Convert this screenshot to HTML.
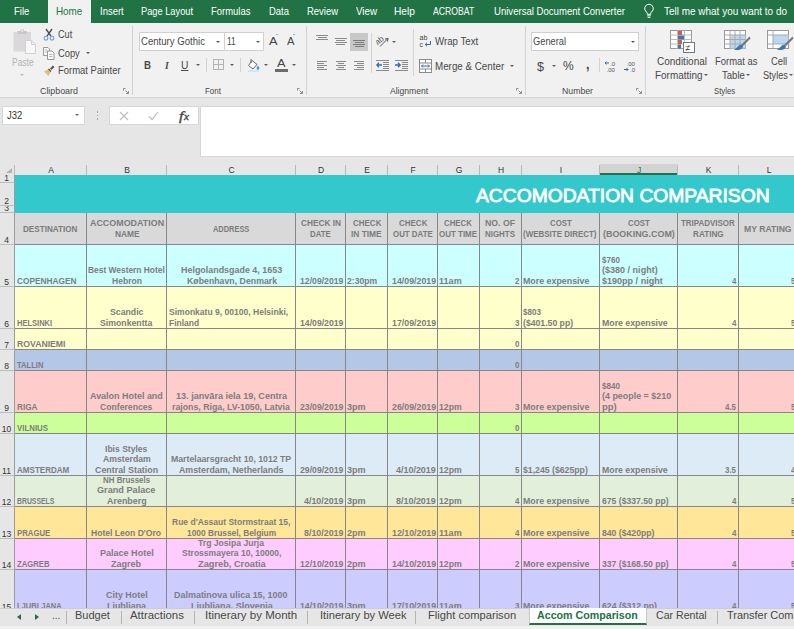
<!DOCTYPE html>
<html lang="en"><head><meta charset="utf-8"><title>Accomodation Comparison</title>
<style>
*{box-sizing:border-box;margin:0;padding:0}
html,body{width:794px;height:629px;overflow:hidden;background:#e6e6e6;font-family:"Liberation Sans",sans-serif;}
#app{position:relative;width:794px;height:629px;overflow:hidden;background:#e6e6e6}
.abs{position:absolute}
.ft{position:absolute;white-space:nowrap;transform-origin:0 50%;display:block}
.tri{position:absolute;width:0;height:0;border-left:2.5px solid transparent;border-right:2.5px solid transparent}
#tabs{position:absolute;left:0;top:0;width:794px;height:23px;background:#217346}
#home{position:absolute;left:48px;top:0;width:43px;height:24px;background:#f1f1f1}
#ribbon{position:absolute;left:0;top:23px;width:794px;height:75px;background:#f1f1f1;border-bottom:1px solid #d4d4d4}
.sep{position:absolute;top:26px;width:1px;height:69px;background:#d2d2d2}
.ssep{position:absolute;width:1px;height:14px;background:#d2d2d2}
.box{position:absolute;background:#fff;border:1px solid #d0d0d0}
.ch{position:absolute;top:163px;height:12px;font-size:8.5px;line-height:15px;text-align:center;color:#333;background:#e6e6e6}
.ch i{position:absolute;right:0;top:2px;width:1px;height:10px;background:#b9b9b9}
.rh{position:absolute;left:0;width:15px;font-size:8.5px;color:#333;background:#e6e6e6;border-bottom:1px solid #bdbdbd;border-right:1px solid #9b9b9b;display:flex;align-items:flex-end;justify-content:center;line-height:7.500px;overflow:hidden;padding-right:1px}
.band{position:absolute;left:15px;width:785px}
.vl{position:absolute;top:213px;width:1px;height:399px;background:#878787}
.hl{position:absolute;left:15px;width:785px;height:1px;background:#878787}
.g{font-weight:bold}
#sheetbar{position:absolute;left:0;top:608px;width:794px;height:21px;background:#e6e6e6;border-top:1px solid #cdcdcd}
.tsep{position:absolute;top:611px;width:1px;height:13px;background:#b4b4b4}
</style></head><body><div id="app">

<div id="tabs"></div><div id="home"></div>
<span class="ft" style="left:14.0px;top:4.5px;font-size:10.5px;line-height:12.6px;color:#fff;transform:scaleX(0.904);">File</span>
<span class="ft" style="left:100.0px;top:4.5px;font-size:10.5px;line-height:12.6px;color:#fff;transform:scaleX(0.902);">Insert</span>
<span class="ft" style="left:141.3px;top:4.5px;font-size:10.5px;line-height:12.6px;color:#fff;transform:scaleX(0.882);">Page Layout</span>
<span class="ft" style="left:211.3px;top:4.5px;font-size:10.5px;line-height:12.6px;color:#fff;transform:scaleX(0.900);">Formulas</span>
<span class="ft" style="left:269.0px;top:4.5px;font-size:10.5px;line-height:12.6px;color:#fff;transform:scaleX(0.901);">Data</span>
<span class="ft" style="left:307.0px;top:4.5px;font-size:10.5px;line-height:12.6px;color:#fff;transform:scaleX(0.900);">Review</span>
<span class="ft" style="left:355.7px;top:4.5px;font-size:10.5px;line-height:12.6px;color:#fff;transform:scaleX(0.935);">View</span>
<span class="ft" style="left:394.0px;top:4.5px;font-size:10.5px;line-height:12.6px;color:#fff;transform:scaleX(0.972);">Help</span>
<span class="ft" style="left:433.3px;top:4.5px;font-size:10.5px;line-height:12.6px;color:#fff;transform:scaleX(0.826);">ACROBAT</span>
<span class="ft" style="left:493.7px;top:4.5px;font-size:10.5px;line-height:12.6px;color:#fff;transform:scaleX(0.912);">Universal Document Converter</span>
<span class="ft" style="left:664.0px;top:4.5px;font-size:10.5px;line-height:12.6px;color:#fff;transform:scaleX(0.949);">Tell me what you want to do</span>
<span class="ft" style="left:56.0px;top:4.5px;font-size:10.5px;line-height:12.6px;color:#217346;transform:scaleX(0.939);">Home</span>
<svg class="abs" style="left:642px;top:3px" width="14" height="17" viewBox="0 0 14 17"><path d="M7 1.200a4.300 4.300 0 0 0-2.500 7.800c.5.500.8 1.100.8 1.800v.5h3.400v-.5c0-.7.300-1.300.8-1.800A4.300 4.300 0 0 0 7 1.200z" fill="none" stroke="#fff" stroke-width="1"/><path d="M5.300 12.800h3.400M5.700 14.400h2.600" stroke="#fff" stroke-width="1"/></svg>
<div id="ribbon"></div>
<div class="sep" style="left:132px"></div>
<div class="sep" style="left:306px"></div>
<div class="sep" style="left:525px"></div>
<div class="sep" style="left:645px"></div>
<svg class="abs" style="left:12px;top:28px" width="26" height="27" viewBox="0 0 26 27"><rect x="1.500" y="4" width="17.500" height="19.500" fill="#dad8da" /><path d="M5.500 3h3v-1.500h3.500v1.500h3v3h-9.500z" fill="#cac7ca"/><rect x="9.300" y="2.300" width="1.800" height="1.500" fill="#eee"/><path d="M13.500 12.500h6l4 4v9h-10z" fill="#f8f8f8" stroke="#d2d0d2" stroke-width="1"/><path d="M19.500 12.500v4h4" fill="none" stroke="#d2d0d2" stroke-width="1"/></svg>
<span class="ft" style="left:11.6px;top:56.5px;font-size:10px;line-height:12.0px;color:#b3b3b3;transform:scaleX(0.844);">Paste</span>
<i class="tri" style="left:19.8px;top:73.9px;border-left-width:2.2px;border-right-width:2.2px;border-top:2.2px solid #bbb"></i>
<svg class="abs" style="left:43px;top:28px" width="12" height="13" viewBox="0 0 12 13"><path d="M3 1L8 8.200M9 1L4 8.200" stroke="#505050" stroke-width="1.400" fill="none"/><circle cx="3" cy="10.200" r="1.900" fill="none" stroke="#6f9fd0" stroke-width="1.100"/><circle cx="9" cy="10.200" r="1.900" fill="none" stroke="#6f9fd0" stroke-width="1.100"/></svg>
<span class="ft" style="left:57.8px;top:29.2px;font-size:10px;line-height:12.0px;color:#484848;transform:scaleX(0.912);">Cut</span>
<svg class="abs" style="left:43px;top:47px" width="12" height="13" viewBox="0 0 12 13"><path d="M0.500 0.500h4.500l1.500 1.500v6.500h-6z" fill="#fbfbfb" stroke="#8e8e8e" stroke-width=".9"/><path d="M1.800 3h2.500M1.800 5h2" stroke="#999" stroke-width=".7"/><path d="M4.500 4h4.500l2 2v6.500h-6.500z" fill="#fbfbfb" stroke="#8e8e8e" stroke-width=".9"/><path d="M6 7.500h3.500M6 9.500h3.500" stroke="#999" stroke-width=".7"/></svg>
<span class="ft" style="left:57.8px;top:47.9px;font-size:10px;line-height:12.0px;color:#484848;transform:scaleX(0.933);">Copy</span>
<i class="tri" style="left:86.3px;top:52.4px;border-left-width:2.5px;border-right-width:2.5px;border-top:2.5px solid #5a5a5a"></i>
<svg class="abs" style="left:43px;top:65px" width="12" height="12" viewBox="0 0 12 12"><path d="M7 3.500l3-3 1.500 1.500-3 3z" fill="#555"/><path d="M1 6.500l4.500-2.500 2.500 2.500-2.500 4.500z" fill="#e3c078"/><path d="M5.500 4l2.500 2.500" stroke="#555" stroke-width="1.200"/></svg>
<span class="ft" style="left:57.8px;top:65.3px;font-size:10px;line-height:12.0px;color:#484848;transform:scaleX(0.946);">Format Painter</span>
<span class="ft" style="left:39.5px;top:85.5px;font-size:9px;line-height:10.8px;color:#484848;transform:scaleX(0.984);">Clipboard</span>
<svg class="abs" style="left:122.5px;top:88.0px" width="6" height="6" viewBox="0 0 6 6"><path d="M0.500 2.500V0.500H2.500" fill="none" stroke="#8c8c8c" stroke-width="1"/><path d="M2.500 2.500L5.200 5.200M5.500 3V5.500H3" fill="none" stroke="#8c8c8c" stroke-width="1"/></svg>
<div class="box" style="left:139px;top:32px;width:86px;height:19px"></div>
<div class="box" style="left:224px;top:32px;width:40px;height:19px"></div>
<span class="ft" style="left:140.6px;top:35.7px;font-size:10px;line-height:12.0px;color:#484848;transform:scaleX(0.959);">Century Gothic</span>
<span class="ft" style="left:226.7px;top:35.7px;font-size:10px;line-height:12.0px;color:#484848;transform:scaleX(0.828);">11</span>
<i class="tri" style="left:215.9px;top:40.5px;border-left-width:2.5px;border-right-width:2.5px;border-top:2.5px solid #5a5a5a"></i>
<i class="tri" style="left:255.5px;top:40.5px;border-left-width:2.5px;border-right-width:2.5px;border-top:2.5px solid #5a5a5a"></i>
<span class="ft" style="left:268.5px;top:34.6px;font-size:11.5px;line-height:13.8px;color:#484848;transform:scaleX(1.108);">A</span>
<i class="tri" style="left:275.9px;top:33.7px;border-left-width:1.6px;border-right-width:1.6px;border-bottom:1.6px solid #3b78b8"></i>
<span class="ft" style="left:287.0px;top:36.0px;font-size:10px;line-height:12.0px;color:#484848;transform:scaleX(1.124);">A</span>
<i class="tri" style="left:293.4px;top:33.7px;border-left-width:1.6px;border-right-width:1.6px;border-top:1.6px solid #3b78b8"></i>
<span class="ft" style="left:143.5px;top:59.0px;font-size:11px;line-height:13.2px;color:#484848;font-weight:700;transform:scaleX(0.880);">B</span>
<span class="ft" style="left:164.8px;top:59.0px;font-size:11px;line-height:13.2px;color:#484848;font-weight:700;font-style:italic;transform:scaleX(0.864);font-family:'Liberation Serif',serif;">I</span>
<span class="ft" style="left:180.8px;top:59.1px;font-size:10.5px;line-height:12.6px;color:#484848;transform:scaleX(0.974);text-decoration:underline;">U</span>
<i class="tri" style="left:195.5px;top:64.2px;border-left-width:2.5px;border-right-width:2.5px;border-top:2.5px solid #5a5a5a"></i>
<div class="ssep" style="left:206px;top:58px"></div>
<svg class="abs" style="left:213px;top:59px" width="11" height="11" viewBox="0 0 11 11"><rect x="0.500" y="0.500" width="10" height="10" fill="none" stroke="#b4b4b4" stroke-width="1"/><path d="M5.500 0.500v10M0.500 5.500h10" stroke="#b4b4b4" stroke-width="1"/></svg>
<i class="tri" style="left:229.5px;top:64.2px;border-left-width:2.5px;border-right-width:2.5px;border-top:2.5px solid #5a5a5a"></i>
<div class="ssep" style="left:240px;top:58px"></div>
<svg class="abs" style="left:247px;top:58px" width="14" height="14" viewBox="0 0 14 14"><path d="M5 2.500l5 4-4 4.500-4.500-3.500z" fill="#fff" stroke="#666" stroke-width="1"/><path d="M4 1v4" stroke="#666" stroke-width="1"/><path d="M11 7.500c.9 1.300 1.400 2.200 1.400 2.800a1.400 1.400 0 0 1-2.800 0c0-.6.500-1.500 1.400-2.800z" fill="#3b9bd8"/><rect x="1" y="12" width="11" height="2" fill="#cfe7f5"/></svg>
<i class="tri" style="left:263.5px;top:64.2px;border-left-width:2.5px;border-right-width:2.5px;border-top:2.5px solid #5a5a5a"></i>
<span class="ft" style="left:277.0px;top:56.6px;font-size:11.5px;line-height:13.8px;color:#484848;transform:scaleX(1.108);">A</span>
<div class="abs" style="left:275px;top:69px;width:13px;height:3px;background:#6b6b6b"></div>
<i class="tri" style="left:292.0px;top:64.2px;border-left-width:2.5px;border-right-width:2.5px;border-top:2.5px solid #5a5a5a"></i>
<span class="ft" style="left:204.8px;top:85.5px;font-size:9px;line-height:10.8px;color:#484848;transform:scaleX(0.883);">Font</span>
<svg class="abs" style="left:297.0px;top:88.0px" width="6" height="6" viewBox="0 0 6 6"><path d="M0.500 2.500V0.500H2.500" fill="none" stroke="#8c8c8c" stroke-width="1"/><path d="M2.500 2.500L5.200 5.200M5.500 3V5.500H3" fill="none" stroke="#8c8c8c" stroke-width="1"/></svg>
<i class="abs" style="left:316.0px;top:35.0px;width:12px;height:1px;background:#8a8a8a"></i><i class="abs" style="left:317.5px;top:37.0px;width:9px;height:1px;background:#8a8a8a"></i><i class="abs" style="left:316.0px;top:39.0px;width:12px;height:1px;background:#8a8a8a"></i>
<i class="abs" style="left:334.5px;top:38.0px;width:12px;height:1px;background:#8a8a8a"></i><i class="abs" style="left:336.0px;top:40.0px;width:9px;height:1px;background:#8a8a8a"></i><i class="abs" style="left:334.5px;top:42.0px;width:12px;height:1px;background:#8a8a8a"></i><i class="abs" style="left:336.0px;top:44.0px;width:9px;height:1px;background:#8a8a8a"></i>
<div class="abs" style="left:350px;top:33px;width:18px;height:18px;background:#c8c8c8"></div>
<i class="abs" style="left:353.0px;top:40.0px;width:12px;height:1px;background:#7a7a7a"></i><i class="abs" style="left:354.5px;top:42.0px;width:9px;height:1px;background:#7a7a7a"></i><i class="abs" style="left:353.0px;top:44.0px;width:12px;height:1px;background:#7a7a7a"></i><i class="abs" style="left:354.5px;top:46.0px;width:9px;height:1px;background:#7a7a7a"></i>
<div class="ssep" style="left:371px;top:33px;height:40px"></div>
<div class="ssep" style="left:413px;top:29px;height:47px"></div>
<svg class="abs" style="left:376px;top:34px" width="15" height="14" viewBox="0 0 15 14"><text x="0" y="9" font-family="Liberation Sans, sans-serif" font-size="8" fill="#555" transform="rotate(-40 4 8)">ab</text><path d="M4 12.500l8-8M12 4.500l-3 .5M12 4.500l-.5 3" stroke="#555" stroke-width="1" fill="none"/></svg>
<i class="tri" style="left:391.5px;top:40.5px;border-left-width:2.5px;border-right-width:2.5px;border-top:2.5px solid #5a5a5a"></i>
<i class="abs" style="left:317.0px;top:61.0px;width:10px;height:1px;background:#8a8a8a"></i><i class="abs" style="left:317.0px;top:63.0px;width:7px;height:1px;background:#8a8a8a"></i><i class="abs" style="left:317.0px;top:65.0px;width:10px;height:1px;background:#8a8a8a"></i><i class="abs" style="left:317.0px;top:67.0px;width:7px;height:1px;background:#8a8a8a"></i><i class="abs" style="left:317.0px;top:69.0px;width:10px;height:1px;background:#8a8a8a"></i>
<i class="abs" style="left:335.5px;top:61.0px;width:10px;height:1px;background:#8a8a8a"></i><i class="abs" style="left:337.5px;top:63.0px;width:6px;height:1px;background:#8a8a8a"></i><i class="abs" style="left:335.5px;top:65.0px;width:10px;height:1px;background:#8a8a8a"></i><i class="abs" style="left:337.5px;top:67.0px;width:6px;height:1px;background:#8a8a8a"></i><i class="abs" style="left:335.5px;top:69.0px;width:10px;height:1px;background:#8a8a8a"></i>
<i class="abs" style="left:354.0px;top:61.0px;width:10px;height:1px;background:#8a8a8a"></i><i class="abs" style="left:357.0px;top:63.0px;width:7px;height:1px;background:#8a8a8a"></i><i class="abs" style="left:354.0px;top:65.0px;width:10px;height:1px;background:#8a8a8a"></i><i class="abs" style="left:357.0px;top:67.0px;width:7px;height:1px;background:#8a8a8a"></i><i class="abs" style="left:354.0px;top:69.0px;width:10px;height:1px;background:#8a8a8a"></i>
<svg class="abs" style="left:376px;top:60px" width="14" height="12" viewBox="0 0 14 12"><path d="M0 .5h13M7 2.500h6M7 4.500h6M7 6.500h6M7 8.500h6M0 10.500h13" stroke="#8a8a8a" stroke-width="1"/><path d="M6 5h-5M3 2.800L.8 5 3 7.200" stroke="#2b6cb5" stroke-width="1.300" fill="none"/></svg>
<svg class="abs" style="left:395px;top:60px" width="14" height="12" viewBox="0 0 14 12"><path d="M0 .5h13M7 2.500h6M7 4.500h6M7 6.500h6M7 8.500h6M0 10.500h13" stroke="#8a8a8a" stroke-width="1"/><path d="M0 5h5M3 2.800L5.200 5 3 7.200" stroke="#2b6cb5" stroke-width="1.300" fill="none"/></svg>
<svg class="abs" style="left:419px;top:34px" width="13" height="14" viewBox="0 0 13 14"><text x="0.500" y="6" font-family="Liberation Sans, sans-serif" font-size="7" fill="#444">ab</text><text x="0.500" y="13" font-family="Liberation Sans, sans-serif" font-size="7" fill="#444">c</text><path d="M11.500 7v3.500h-5M8 8.800L6.200 10.500 8 12.200" stroke="#2b6cb5" stroke-width="1" fill="none"/></svg>
<span class="ft" style="left:434.8px;top:35.9px;font-size:10px;line-height:12.0px;color:#484848;transform:scaleX(0.967);">Wrap Text</span>
<svg class="abs" style="left:419px;top:58.500px" width="13" height="14" viewBox="0 0 13 14"><rect x="0.500" y="0.500" width="12" height="13" fill="#fff" stroke="#8a8a8a" stroke-width="1"/><path d="M0.500 4h12M0.500 10h12M6.500 0.500v3.500M6.500 10v3.500" stroke="#8a8a8a" stroke-width="1"/><path d="M2.500 7h8M4 5.500L2.500 7 4 8.500M9 5.500L10.500 7 9 8.500" stroke="#2b6cb5" stroke-width="1" fill="none"/></svg>
<span class="ft" style="left:434.8px;top:60.5px;font-size:10px;line-height:12.0px;color:#484848;transform:scaleX(0.980);">Merge &amp; Center</span>
<i class="tri" style="left:510.2px;top:64.8px;border-left-width:2.5px;border-right-width:2.5px;border-top:2.5px solid #5a5a5a"></i>
<span class="ft" style="left:389.8px;top:85.5px;font-size:9px;line-height:10.8px;color:#484848;transform:scaleX(0.952);">Alignment</span>
<svg class="abs" style="left:515.5px;top:88.0px" width="6" height="6" viewBox="0 0 6 6"><path d="M0.500 2.500V0.500H2.500" fill="none" stroke="#8c8c8c" stroke-width="1"/><path d="M2.500 2.500L5.200 5.200M5.500 3V5.500H3" fill="none" stroke="#8c8c8c" stroke-width="1"/></svg>
<div class="box" style="left:531px;top:32px;width:108px;height:19px"></div>
<span class="ft" style="left:533.4px;top:35.9px;font-size:10px;line-height:12.0px;color:#484848;transform:scaleX(0.928);">General</span>
<i class="tri" style="left:630.5px;top:40.5px;border-left-width:2.5px;border-right-width:2.5px;border-top:2.5px solid #5a5a5a"></i>
<span class="ft" style="left:536.5px;top:58.5px;font-size:13px;line-height:15.6px;color:#484848;transform:scaleX(0.968);">$</span>
<i class="tri" style="left:551.5px;top:65.0px;border-left-width:2.5px;border-right-width:2.5px;border-top:2.5px solid #5a5a5a"></i>
<span class="ft" style="left:563.0px;top:58.9px;font-size:12px;line-height:14.4px;color:#484848;transform:scaleX(1.003);">%</span>
<span class="ft" style="left:585.5px;top:54.6px;font-size:15px;line-height:18.0px;color:#484848;font-weight:700;transform:scaleX(0.839);">,</span>
<div class="ssep" style="left:599px;top:58px"></div>
<svg class="abs" style="left:604px;top:60px" width="14" height="13" viewBox="0 0 14 13"><text x="6" y="5.500" font-family="Liberation Sans, sans-serif" font-size="6" fill="#555">.0</text><text x="2.500" y="12" font-family="Liberation Sans, sans-serif" font-size="6" fill="#555">.00</text><path d="M5 3h-4M2.500 1.500L1 3l1.500 1.500" stroke="#2b6cb5" stroke-width="1" fill="none"/></svg>
<svg class="abs" style="left:623px;top:60px" width="14" height="13" viewBox="0 0 14 13"><text x="3.500" y="5.500" font-family="Liberation Sans, sans-serif" font-size="6" fill="#555">.00</text><text x="7" y="12" font-family="Liberation Sans, sans-serif" font-size="6" fill="#555">.0</text><path d="M1 9.500h4M3.500 8L5 9.500 3.500 11" stroke="#2b6cb5" stroke-width="1" fill="none"/></svg>
<span class="ft" style="left:562.4px;top:85.5px;font-size:9px;line-height:10.8px;color:#484848;transform:scaleX(0.968);">Number</span>
<svg class="abs" style="left:635.5px;top:88.0px" width="6" height="6" viewBox="0 0 6 6"><path d="M0.500 2.500V0.500H2.500" fill="none" stroke="#8c8c8c" stroke-width="1"/><path d="M2.500 2.500L5.200 5.200M5.500 3V5.500H3" fill="none" stroke="#8c8c8c" stroke-width="1"/></svg>
<svg class="abs" style="left:670px;top:30px" width="26" height="24" viewBox="0 0 26 24"><rect x="0.500" y="0.500" width="21" height="18" fill="#fff" stroke="#999" stroke-width="1"/><path d="M7.500 0.500v18M14.500 0.500v18M0.500 5h21M0.500 9.500h21M0.500 14h21" stroke="#bbb" stroke-width="1"/><rect x="8" y="1" width="4" height="4" fill="#d65c4a"/><rect x="8" y="5.500" width="6" height="4" fill="#3b78b8"/><rect x="8" y="10" width="4" height="4" fill="#d65c4a"/><rect x="8" y="14.500" width="3" height="4" fill="#3b78b8"/><rect x="13.500" y="12.500" width="11" height="10" fill="#fff" stroke="#777" stroke-width="1"/><text x="15.500" y="21" font-family="Liberation Sans, sans-serif" font-size="9" fill="#444">≠</text></svg>
<span class="ft" style="left:656.6px;top:56.4px;font-size:10px;line-height:12.0px;color:#484848;transform:scaleX(0.999);">Conditional</span>
<span class="ft" style="left:654.6px;top:69.5px;font-size:10px;line-height:12.0px;color:#484848;transform:scaleX(0.992);">Formatting</span>
<i class="tri" style="left:704.1px;top:74.3px;border-left-width:2.5px;border-right-width:2.5px;border-top:2.5px solid #5a5a5a"></i>
<svg class="abs" style="left:724px;top:30px" width="27" height="24" viewBox="0 0 27 24"><rect x="0.500" y="0.500" width="21" height="18" fill="#fff" stroke="#999" stroke-width="1"/><rect x="6" y="5" width="15.500" height="13.500" fill="#bdd7ee"/><path d="M6 0.500v18M11 0.500v18M16 0.500v18M0.500 5h21M0.500 9.500h21M0.500 14h21" stroke="#aaa" stroke-width="1"/><path d="M25.500 6.500l-8 8 1.500 1.500 7.500-7.500z" fill="#777"/><path d="M17.500 14.500c-3 0-3.500 3-7.500 5 4 1.500 9 0 9-3.500z" fill="#3b78b8"/></svg>
<span class="ft" style="left:715.0px;top:56.4px;font-size:10px;line-height:12.0px;color:#484848;transform:scaleX(0.942);">Format as</span>
<span class="ft" style="left:721.7px;top:69.5px;font-size:10px;line-height:12.0px;color:#484848;transform:scaleX(0.954);">Table</span>
<i class="tri" style="left:746.0px;top:74.3px;border-left-width:2.5px;border-right-width:2.5px;border-top:2.5px solid #5a5a5a"></i>
<svg class="abs" style="left:767px;top:30px" width="27" height="24" viewBox="0 0 27 24"><rect x="0.500" y="0.500" width="21" height="18" fill="#fff" stroke="#999" stroke-width="1"/><rect x="6" y="5" width="15.500" height="9" fill="#bdd7ee"/><path d="M6 0.500v18M0.500 5h21M0.500 14h21" stroke="#aaa" stroke-width="1"/><path d="M25.500 6.500l-8 8 1.500 1.500 7.500-7.500z" fill="#777"/><path d="M17.500 14.500c-3 0-3.500 3-7.500 5 4 1.500 9 0 9-3.500z" fill="#3b78b8"/></svg>
<span class="ft" style="left:771.0px;top:56.4px;font-size:10px;line-height:12.0px;color:#484848;transform:scaleX(0.940);">Cell</span>
<span class="ft" style="left:763.4px;top:69.5px;font-size:10px;line-height:12.0px;color:#484848;transform:scaleX(0.911);">Styles</span>
<i class="tri" style="left:789.4px;top:74.3px;border-left-width:2.5px;border-right-width:2.5px;border-top:2.5px solid #5a5a5a"></i>
<span class="ft" style="left:713.6px;top:85.5px;font-size:9px;line-height:10.8px;color:#484848;transform:scaleX(0.865);">Styles</span>
<div class="box" style="left:2px;top:106px;width:83px;height:19px;border-color:#d6d6d6"></div>
<span class="ft" style="left:6.7px;top:109.4px;font-size:10.5px;line-height:12.6px;color:#333;transform:scaleX(0.903);">J32</span>
<i class="tri" style="left:74.8px;top:114.2px;border-left-width:2.5px;border-right-width:2.5px;border-top:2.5px solid #666"></i>
<i class="abs" style="left:96.500px;top:111px;width:1.500px;height:1.500px;background:#aaa"></i>
<i class="abs" style="left:96.500px;top:114.5px;width:1.500px;height:1.500px;background:#aaa"></i>
<i class="abs" style="left:96.500px;top:118px;width:1.500px;height:1.500px;background:#aaa"></i>
<div class="box" style="left:109px;top:106px;width:90px;height:19px;border-color:#d6d6d6"></div>
<svg class="abs" style="left:119px;top:111px" width="10" height="10" viewBox="0 0 10 10"><path d="M1 1l8 8M9 1l-8 8" stroke="#bdbdbd" stroke-width="1.200"/></svg>
<svg class="abs" style="left:148px;top:111px" width="11" height="10" viewBox="0 0 11 10"><path d="M1 5.500l3 3 6-7.500" stroke="#bdbdbd" stroke-width="1.200" fill="none"/></svg>
<span class="ft" style="left:178.5px;top:107.7px;font-size:13px;line-height:15.6px;color:#444;font-style:italic;transform:scaleX(1.241);font-family:'Liberation Serif',serif;-webkit-text-stroke:.35px #444;">f</span>
<span class="ft" style="left:183.5px;top:111.5px;font-size:9.5px;line-height:11.4px;color:#444;font-style:italic;transform:scaleX(1.185);font-family:'Liberation Serif',serif;-webkit-text-stroke:.3px #444;">x</span>
<div class="box" style="left:200px;top:106px;width:600px;height:51px;border-color:#d6d6d6"></div>
<div class="ch" style="left:15px;width:72px;">A<i></i></div>
<div class="ch" style="left:87px;width:80px;">B<i></i></div>
<div class="ch" style="left:167px;width:129px;">C<i></i></div>
<div class="ch" style="left:296px;width:50px;">D<i></i></div>
<div class="ch" style="left:346px;width:42px;">E<i></i></div>
<div class="ch" style="left:388px;width:50px;">F<i></i></div>
<div class="ch" style="left:438px;width:42px;">G<i></i></div>
<div class="ch" style="left:480px;width:42px;">H<i></i></div>
<div class="ch" style="left:522px;width:78px;">I<i></i></div>
<div class="ch" style="left:600px;width:78px;background:#d3d3d3;border-bottom:2px solid #217346;color:#217346;top:164px;height:11px;line-height:13px;">J<i></i></div>
<div class="ch" style="left:678px;width:61px;">K<i></i></div>
<div class="ch" style="left:739px;width:60px;">L<i></i></div>
<i class="abs" style="left:14px;top:165px;width:1px;height:10px;background:#b9b9b9"></i>
<div class="abs" style="left:6px;top:167.500px;width:0;height:0;border-left:6.500px solid transparent;border-bottom:5.500px solid #b2b2b2"></div>
<div class="rh" style="top:175px;height:8px">1</div>
<div class="rh" style="top:183px;height:23px">2</div>
<div class="rh" style="top:206px;height:7px">3</div>
<div class="rh" style="top:213px;height:32px">4</div>
<div class="rh" style="top:245px;height:42px">5</div>
<div class="rh" style="top:287px;height:42px">6</div>
<div class="rh" style="top:329px;height:21px">7</div>
<div class="rh" style="top:350px;height:21px">8</div>
<div class="rh" style="top:371px;height:42px">9</div>
<div class="rh" style="top:413px;height:21px">10</div>
<div class="rh" style="top:434px;height:42px">11</div>
<div class="rh" style="top:476px;height:31px">12</div>
<div class="rh" style="top:507px;height:32px">13</div>
<div class="rh" style="top:539px;height:31px">14</div>
<div class="rh" style="top:570px;height:42px">15</div>
<div class="band" style="top:175px;height:38px;background:#33c8cc"></div>
<span class="ft" style="left:475.5px;top:184.4px;font-size:19.2px;line-height:23.0px;color:#fff;transform:scaleX(1.004);-webkit-text-stroke:0.85px #fff;">ACCOMODATION COMPARISON</span>
<div class="band" style="top:213px;height:32px;background:#d9d9d9"></div>
<div class="band" style="top:245px;height:42px;background:#ccffff"></div>
<div class="band" style="top:287px;height:42px;background:#ffffcc"></div>
<div class="band" style="top:329px;height:21px;background:#ffffcc"></div>
<div class="band" style="top:350px;height:21px;background:#b4c7e7"></div>
<div class="band" style="top:371px;height:42px;background:#ffcccc"></div>
<div class="band" style="top:413px;height:21px;background:#ccff99"></div>
<div class="band" style="top:434px;height:42px;background:#ddebf7"></div>
<div class="band" style="top:476px;height:31px;background:#e2efda"></div>
<div class="band" style="top:507px;height:32px;background:#ffe699"></div>
<div class="band" style="top:539px;height:31px;background:#ffccff"></div>
<div class="band" style="top:570px;height:42px;background:#ccccff"></div>
<i class="vl" style="left:86px"></i>
<i class="vl" style="left:166px"></i>
<i class="vl" style="left:295px"></i>
<i class="vl" style="left:345px"></i>
<i class="vl" style="left:387px"></i>
<i class="vl" style="left:437px"></i>
<i class="vl" style="left:479px"></i>
<i class="vl" style="left:521px"></i>
<i class="vl" style="left:599px"></i>
<i class="vl" style="left:677px"></i>
<i class="vl" style="left:738px"></i>
<i class="vl" style="left:798px"></i>
<i class="hl" style="top:244px"></i>
<i class="hl" style="top:286px"></i>
<i class="hl" style="top:328px"></i>
<i class="hl" style="top:349px"></i>
<i class="hl" style="top:370px"></i>
<i class="hl" style="top:412px"></i>
<i class="hl" style="top:433px"></i>
<i class="hl" style="top:475px"></i>
<i class="hl" style="top:506px"></i>
<i class="hl" style="top:538px"></i>
<i class="hl" style="top:569px"></i>
<i class="hl" style="top:611px"></i>
<span class="ft" style="left:23.4px;top:223.7px;font-size:8.8px;line-height:10.6px;color:#7b7b7b;font-weight:700;transform:scaleX(0.922);">DESTINATION</span>
<span class="ft" style="left:89.5px;top:218.4px;font-size:8.8px;line-height:10.6px;color:#7b7b7b;font-weight:700;transform:scaleX(1.013);">ACCOMODATION</span>
<span class="ft" style="left:114.5px;top:229.0px;font-size:8.8px;line-height:10.6px;color:#7b7b7b;font-weight:700;transform:scaleX(0.953);">NAME</span>
<span class="ft" style="left:213.0px;top:223.7px;font-size:8.8px;line-height:10.6px;color:#7b7b7b;font-weight:700;transform:scaleX(0.844);">ADDRESS</span>
<span class="ft" style="left:300.7px;top:218.4px;font-size:8.8px;line-height:10.6px;color:#7b7b7b;font-weight:700;transform:scaleX(0.943);">CHECK IN</span>
<span class="ft" style="left:310.0px;top:229.0px;font-size:8.8px;line-height:10.6px;color:#7b7b7b;font-weight:700;transform:scaleX(0.889);">DATE</span>
<span class="ft" style="left:352.8px;top:218.4px;font-size:8.8px;line-height:10.6px;color:#7b7b7b;font-weight:700;transform:scaleX(0.908);">CHECK</span>
<span class="ft" style="left:351.1px;top:229.0px;font-size:8.8px;line-height:10.6px;color:#7b7b7b;font-weight:700;transform:scaleX(0.951);">IN TIME</span>
<span class="ft" style="left:398.5px;top:218.4px;font-size:8.8px;line-height:10.6px;color:#7b7b7b;font-weight:700;transform:scaleX(0.908);">CHECK</span>
<span class="ft" style="left:392.8px;top:229.0px;font-size:8.8px;line-height:10.6px;color:#7b7b7b;font-weight:700;transform:scaleX(0.898);">OUT DATE</span>
<span class="ft" style="left:444.2px;top:218.4px;font-size:8.8px;line-height:10.6px;color:#7b7b7b;font-weight:700;transform:scaleX(0.889);">CHECK</span>
<span class="ft" style="left:439.2px;top:229.0px;font-size:8.8px;line-height:10.6px;color:#7b7b7b;font-weight:700;transform:scaleX(0.906);">OUT TIME</span>
<span class="ft" style="left:485.3px;top:218.4px;font-size:8.8px;line-height:10.6px;color:#7b7b7b;font-weight:700;transform:scaleX(0.990);">NO. OF</span>
<span class="ft" style="left:485.3px;top:229.0px;font-size:8.8px;line-height:10.6px;color:#7b7b7b;font-weight:700;transform:scaleX(0.903);">NIGHTS</span>
<span class="ft" style="left:550.0px;top:218.4px;font-size:8.8px;line-height:10.6px;color:#7b7b7b;font-weight:700;transform:scaleX(0.888);">COST</span>
<span class="ft" style="left:523.3px;top:229.0px;font-size:8.8px;line-height:10.6px;color:#7b7b7b;font-weight:700;transform:scaleX(0.906);">(WEBSITE DIRECT)</span>
<span class="ft" style="left:628.1px;top:218.4px;font-size:8.8px;line-height:10.6px;color:#7b7b7b;font-weight:700;transform:scaleX(0.888);">COST</span>
<span class="ft" style="left:603.1px;top:229.0px;font-size:8.8px;line-height:10.6px;color:#7b7b7b;font-weight:700;transform:scaleX(1.013);">(BOOKING.COM)</span>
<span class="ft" style="left:680.9px;top:218.4px;font-size:8.8px;line-height:10.6px;color:#7b7b7b;font-weight:700;transform:scaleX(0.903);">TRIPADVISOR</span>
<span class="ft" style="left:692.6px;top:229.0px;font-size:8.8px;line-height:10.6px;color:#7b7b7b;font-weight:700;transform:scaleX(0.928);">RATING</span>
<span class="ft" style="left:744.3px;top:223.7px;font-size:8.8px;line-height:10.6px;color:#7b7b7b;font-weight:700;transform:scaleX(0.980);">MY RATING</span>
<span class="ft" style="left:16.8px;top:275.8px;font-size:8.8px;line-height:10.6px;color:#7d7d7d;font-weight:700;transform:scaleX(0.945);">COPENHAGEN</span>
<span class="ft" style="left:88.0px;top:265.3px;font-size:8.8px;line-height:10.6px;color:#7d7d7d;font-weight:700;transform:scaleX(0.954);">Best Western Hotel</span>
<span class="ft" style="left:111.7px;top:275.8px;font-size:8.8px;line-height:10.6px;color:#7d7d7d;font-weight:700;transform:scaleX(0.974);">Hebron</span>
<span class="ft" style="left:180.8px;top:265.3px;font-size:8.8px;line-height:10.6px;color:#7d7d7d;font-weight:700;transform:scaleX(1.014);">Helgolandsgade 4, 1653</span>
<span class="ft" style="left:186.8px;top:275.8px;font-size:8.8px;line-height:10.6px;color:#7d7d7d;font-weight:700;transform:scaleX(0.996);">København, Denmark</span>
<span class="ft" style="left:300.3px;top:275.8px;font-size:8.8px;line-height:10.6px;color:#7d7d7d;font-weight:700;transform:scaleX(0.986);">12/09/2019</span>
<span class="ft" style="left:347.3px;top:275.8px;font-size:8.8px;line-height:10.6px;color:#7d7d7d;font-weight:700;transform:scaleX(0.977);">2:30pm</span>
<span class="ft" style="left:391.7px;top:275.8px;font-size:8.8px;line-height:10.6px;color:#7d7d7d;font-weight:700;transform:scaleX(1.002);">14/09/2019</span>
<span class="ft" style="left:439.1px;top:275.8px;font-size:8.8px;line-height:10.6px;color:#7d7d7d;font-weight:700;transform:scaleX(1.031);">11am</span>
<span class="ft" style="left:515.2px;top:275.8px;font-size:8.8px;line-height:10.6px;color:#7d7d7d;font-weight:700;transform:scaleX(0.897);">2</span>
<span class="ft" style="left:522.9px;top:275.8px;font-size:8.8px;line-height:10.6px;color:#7d7d7d;font-weight:700;transform:scaleX(1.006);">More expensive</span>
<span class="ft" style="left:601.8px;top:254.8px;font-size:8.8px;line-height:10.6px;color:#7d7d7d;font-weight:700;transform:scaleX(0.919);">$760</span>
<span class="ft" style="left:601.8px;top:265.3px;font-size:8.8px;line-height:10.6px;color:#7d7d7d;font-weight:700;transform:scaleX(1.026);">($380 / night)</span>
<span class="ft" style="left:601.8px;top:275.8px;font-size:8.8px;line-height:10.6px;color:#7d7d7d;font-weight:700;transform:scaleX(1.026);">$190pp / night</span>
<span class="ft" style="left:731.6px;top:275.8px;font-size:8.8px;line-height:10.6px;color:#7d7d7d;font-weight:700;transform:scaleX(0.897);">4</span>
<span class="ft" style="left:791.0px;top:275.8px;font-size:8.8px;line-height:10.6px;color:#7d7d7d;font-weight:700;transform:scaleX(0.917);">5</span>
<span class="ft" style="left:16.8px;top:317.8px;font-size:8.8px;line-height:10.6px;color:#7d7d7d;font-weight:700;transform:scaleX(0.855);">HELSINKI</span>
<span class="ft" style="left:110.0px;top:307.3px;font-size:8.8px;line-height:10.6px;color:#7d7d7d;font-weight:700;transform:scaleX(0.990);">Scandic</span>
<span class="ft" style="left:100.0px;top:317.8px;font-size:8.8px;line-height:10.6px;color:#7d7d7d;font-weight:700;transform:scaleX(0.992);">Simonkentta</span>
<span class="ft" style="left:169.1px;top:307.3px;font-size:8.8px;line-height:10.6px;color:#7d7d7d;font-weight:700;transform:scaleX(0.971);">Simonkatu 9, 00100, Helsinki,</span>
<span class="ft" style="left:169.1px;top:317.8px;font-size:8.8px;line-height:10.6px;color:#7d7d7d;font-weight:700;transform:scaleX(0.962);">Finland</span>
<span class="ft" style="left:300.3px;top:317.8px;font-size:8.8px;line-height:10.6px;color:#7d7d7d;font-weight:700;transform:scaleX(0.986);">14/09/2019</span>
<span class="ft" style="left:391.7px;top:317.8px;font-size:8.8px;line-height:10.6px;color:#7d7d7d;font-weight:700;transform:scaleX(1.002);">17/09/2019</span>
<span class="ft" style="left:515.2px;top:317.8px;font-size:8.8px;line-height:10.6px;color:#7d7d7d;font-weight:700;transform:scaleX(0.897);">3</span>
<span class="ft" style="left:522.9px;top:307.3px;font-size:8.8px;line-height:10.6px;color:#7d7d7d;font-weight:700;transform:scaleX(0.919);">$803</span>
<span class="ft" style="left:522.9px;top:317.8px;font-size:8.8px;line-height:10.6px;color:#7d7d7d;font-weight:700;transform:scaleX(0.985);">($401.50 pp)</span>
<span class="ft" style="left:601.8px;top:317.8px;font-size:8.8px;line-height:10.6px;color:#7d7d7d;font-weight:700;transform:scaleX(0.995);">More expensive</span>
<span class="ft" style="left:731.6px;top:317.8px;font-size:8.8px;line-height:10.6px;color:#7d7d7d;font-weight:700;transform:scaleX(0.897);">4</span>
<span class="ft" style="left:791.0px;top:317.8px;font-size:8.8px;line-height:10.6px;color:#7d7d7d;font-weight:700;transform:scaleX(0.917);">5</span>
<span class="ft" style="left:16.8px;top:338.8px;font-size:8.8px;line-height:10.6px;color:#7d7d7d;font-weight:700;transform:scaleX(0.986);">ROVANIEMI</span>
<span class="ft" style="left:515.2px;top:338.8px;font-size:8.8px;line-height:10.6px;color:#7d7d7d;font-weight:700;transform:scaleX(0.897);">0</span>
<span class="ft" style="left:16.8px;top:359.8px;font-size:8.8px;line-height:10.6px;color:#7d7d7d;font-weight:700;transform:scaleX(0.865);">TALLIN</span>
<span class="ft" style="left:515.2px;top:359.8px;font-size:8.8px;line-height:10.6px;color:#7d7d7d;font-weight:700;transform:scaleX(0.897);">0</span>
<span class="ft" style="left:16.8px;top:401.8px;font-size:8.8px;line-height:10.6px;color:#7d7d7d;font-weight:700;transform:scaleX(0.932);">RIGA</span>
<span class="ft" style="left:90.0px;top:391.3px;font-size:8.8px;line-height:10.6px;color:#7d7d7d;font-weight:700;transform:scaleX(1.018);">Avalon Hotel and</span>
<span class="ft" style="left:100.0px;top:401.8px;font-size:8.8px;line-height:10.6px;color:#7d7d7d;font-weight:700;transform:scaleX(0.983);">Conferences</span>
<span class="ft" style="left:175.8px;top:391.3px;font-size:8.8px;line-height:10.6px;color:#7d7d7d;font-weight:700;transform:scaleX(1.033);">13. janvāra iela 19, Centra</span>
<span class="ft" style="left:171.5px;top:401.8px;font-size:8.8px;line-height:10.6px;color:#7d7d7d;font-weight:700;transform:scaleX(0.997);">rajons, Riga, LV-1050, Latvia</span>
<span class="ft" style="left:300.3px;top:401.8px;font-size:8.8px;line-height:10.6px;color:#7d7d7d;font-weight:700;transform:scaleX(0.986);">23/09/2019</span>
<span class="ft" style="left:347.3px;top:401.8px;font-size:8.8px;line-height:10.6px;color:#7d7d7d;font-weight:700;transform:scaleX(1.034);">3pm</span>
<span class="ft" style="left:391.7px;top:401.8px;font-size:8.8px;line-height:10.6px;color:#7d7d7d;font-weight:700;transform:scaleX(1.002);">26/09/2019</span>
<span class="ft" style="left:439.1px;top:401.8px;font-size:8.8px;line-height:10.6px;color:#7d7d7d;font-weight:700;transform:scaleX(0.988);">12pm</span>
<span class="ft" style="left:515.2px;top:401.8px;font-size:8.8px;line-height:10.6px;color:#7d7d7d;font-weight:700;transform:scaleX(0.897);">3</span>
<span class="ft" style="left:522.9px;top:401.8px;font-size:8.8px;line-height:10.6px;color:#7d7d7d;font-weight:700;transform:scaleX(1.006);">More expensive</span>
<span class="ft" style="left:601.8px;top:380.8px;font-size:8.8px;line-height:10.6px;color:#7d7d7d;font-weight:700;transform:scaleX(0.919);">$840</span>
<span class="ft" style="left:601.8px;top:391.3px;font-size:8.8px;line-height:10.6px;color:#7d7d7d;font-weight:700;transform:scaleX(1.013);">(4 people = $210</span>
<span class="ft" style="left:601.8px;top:401.8px;font-size:8.8px;line-height:10.6px;color:#7d7d7d;font-weight:700;transform:scaleX(1.074);">pp)</span>
<span class="ft" style="left:725.0px;top:401.8px;font-size:8.8px;line-height:10.6px;color:#7d7d7d;font-weight:700;transform:scaleX(0.899);">4.5</span>
<span class="ft" style="left:791.0px;top:401.8px;font-size:8.8px;line-height:10.6px;color:#7d7d7d;font-weight:700;transform:scaleX(0.917);">5</span>
<span class="ft" style="left:16.8px;top:422.8px;font-size:8.8px;line-height:10.6px;color:#7d7d7d;font-weight:700;transform:scaleX(0.893);">VILNIUS</span>
<span class="ft" style="left:515.2px;top:422.8px;font-size:8.8px;line-height:10.6px;color:#7d7d7d;font-weight:700;transform:scaleX(0.897);">0</span>
<span class="ft" style="left:16.8px;top:464.8px;font-size:8.8px;line-height:10.6px;color:#7d7d7d;font-weight:700;transform:scaleX(0.915);">AMSTERDAM</span>
<span class="ft" style="left:105.0px;top:443.8px;font-size:8.8px;line-height:10.6px;color:#7d7d7d;font-weight:700;transform:scaleX(0.974);">Ibis Styles</span>
<span class="ft" style="left:103.0px;top:454.3px;font-size:8.8px;line-height:10.6px;color:#7d7d7d;font-weight:700;transform:scaleX(0.987);">Amsterdam</span>
<span class="ft" style="left:95.0px;top:464.8px;font-size:8.8px;line-height:10.6px;color:#7d7d7d;font-weight:700;transform:scaleX(1.009);">Central Station</span>
<span class="ft" style="left:170.8px;top:454.3px;font-size:8.8px;line-height:10.6px;color:#7d7d7d;font-weight:700;transform:scaleX(0.991);">Martelaarsgracht 10, 1012 TP</span>
<span class="ft" style="left:179.1px;top:464.8px;font-size:8.8px;line-height:10.6px;color:#7d7d7d;font-weight:700;transform:scaleX(1.003);">Amsterdam, Netherlands</span>
<span class="ft" style="left:300.3px;top:464.8px;font-size:8.8px;line-height:10.6px;color:#7d7d7d;font-weight:700;transform:scaleX(0.986);">29/09/2019</span>
<span class="ft" style="left:347.3px;top:464.8px;font-size:8.8px;line-height:10.6px;color:#7d7d7d;font-weight:700;transform:scaleX(1.034);">3pm</span>
<span class="ft" style="left:396.0px;top:464.8px;font-size:8.8px;line-height:10.6px;color:#7d7d7d;font-weight:700;transform:scaleX(1.017);">4/10/2019</span>
<span class="ft" style="left:439.1px;top:464.8px;font-size:8.8px;line-height:10.6px;color:#7d7d7d;font-weight:700;transform:scaleX(0.988);">12pm</span>
<span class="ft" style="left:515.2px;top:464.8px;font-size:8.8px;line-height:10.6px;color:#7d7d7d;font-weight:700;transform:scaleX(0.897);">5</span>
<span class="ft" style="left:522.9px;top:464.8px;font-size:8.8px;line-height:10.6px;color:#7d7d7d;font-weight:700;transform:scaleX(0.989);">$1,245 ($625pp)</span>
<span class="ft" style="left:601.8px;top:464.8px;font-size:8.8px;line-height:10.6px;color:#7d7d7d;font-weight:700;transform:scaleX(0.995);">More expensive</span>
<span class="ft" style="left:725.0px;top:464.8px;font-size:8.8px;line-height:10.6px;color:#7d7d7d;font-weight:700;transform:scaleX(0.899);">3.5</span>
<span class="ft" style="left:791.0px;top:464.8px;font-size:8.8px;line-height:10.6px;color:#7d7d7d;font-weight:700;transform:scaleX(0.917);">4</span>
<span class="ft" style="left:16.8px;top:495.8px;font-size:8.8px;line-height:10.6px;color:#7d7d7d;font-weight:700;transform:scaleX(0.779);">BRUSSELS</span>
<span class="ft" style="left:103.0px;top:474.8px;font-size:8.8px;line-height:10.6px;color:#7d7d7d;font-weight:700;transform:scaleX(0.900);">NH Brussels</span>
<span class="ft" style="left:96.7px;top:485.3px;font-size:8.8px;line-height:10.6px;color:#7d7d7d;font-weight:700;transform:scaleX(1.039);">Grand Palace</span>
<span class="ft" style="left:106.7px;top:495.8px;font-size:8.8px;line-height:10.6px;color:#7d7d7d;font-weight:700;transform:scaleX(1.015);">Arenberg</span>
<span class="ft" style="left:304.3px;top:495.8px;font-size:8.8px;line-height:10.6px;color:#7d7d7d;font-weight:700;transform:scaleX(1.007);">4/10/2019</span>
<span class="ft" style="left:347.3px;top:495.8px;font-size:8.8px;line-height:10.6px;color:#7d7d7d;font-weight:700;transform:scaleX(1.034);">3pm</span>
<span class="ft" style="left:396.0px;top:495.8px;font-size:8.8px;line-height:10.6px;color:#7d7d7d;font-weight:700;transform:scaleX(1.017);">8/10/2019</span>
<span class="ft" style="left:439.1px;top:495.8px;font-size:8.8px;line-height:10.6px;color:#7d7d7d;font-weight:700;transform:scaleX(0.988);">12pm</span>
<span class="ft" style="left:515.2px;top:495.8px;font-size:8.8px;line-height:10.6px;color:#7d7d7d;font-weight:700;transform:scaleX(0.897);">4</span>
<span class="ft" style="left:522.9px;top:495.8px;font-size:8.8px;line-height:10.6px;color:#7d7d7d;font-weight:700;transform:scaleX(1.006);">More expensive</span>
<span class="ft" style="left:601.8px;top:495.8px;font-size:8.8px;line-height:10.6px;color:#7d7d7d;font-weight:700;transform:scaleX(0.981);">675 ($337.50 pp)</span>
<span class="ft" style="left:731.6px;top:495.8px;font-size:8.8px;line-height:10.6px;color:#7d7d7d;font-weight:700;transform:scaleX(0.897);">4</span>
<span class="ft" style="left:791.0px;top:495.8px;font-size:8.8px;line-height:10.6px;color:#7d7d7d;font-weight:700;transform:scaleX(0.917);">5</span>
<span class="ft" style="left:16.8px;top:527.8px;font-size:8.8px;line-height:10.6px;color:#7d7d7d;font-weight:700;transform:scaleX(0.882);">PRAGUE</span>
<span class="ft" style="left:91.3px;top:527.8px;font-size:8.8px;line-height:10.6px;color:#7d7d7d;font-weight:700;transform:scaleX(0.974);">Hotel Leon D'Oro</span>
<span class="ft" style="left:171.8px;top:517.3px;font-size:8.8px;line-height:10.6px;color:#7d7d7d;font-weight:700;transform:scaleX(0.968);">Rue d'Assaut Stormstraat 15,</span>
<span class="ft" style="left:186.8px;top:527.8px;font-size:8.8px;line-height:10.6px;color:#7d7d7d;font-weight:700;transform:scaleX(0.949);">1000 Brussel, Belgium</span>
<span class="ft" style="left:304.3px;top:527.8px;font-size:8.8px;line-height:10.6px;color:#7d7d7d;font-weight:700;transform:scaleX(1.007);">8/10/2019</span>
<span class="ft" style="left:347.3px;top:527.8px;font-size:8.8px;line-height:10.6px;color:#7d7d7d;font-weight:700;transform:scaleX(1.034);">2pm</span>
<span class="ft" style="left:391.7px;top:527.8px;font-size:8.8px;line-height:10.6px;color:#7d7d7d;font-weight:700;transform:scaleX(1.002);">12/10/2019</span>
<span class="ft" style="left:439.1px;top:527.8px;font-size:8.8px;line-height:10.6px;color:#7d7d7d;font-weight:700;transform:scaleX(1.031);">11am</span>
<span class="ft" style="left:515.2px;top:527.8px;font-size:8.8px;line-height:10.6px;color:#7d7d7d;font-weight:700;transform:scaleX(0.897);">4</span>
<span class="ft" style="left:522.9px;top:527.8px;font-size:8.8px;line-height:10.6px;color:#7d7d7d;font-weight:700;transform:scaleX(1.006);">More expensive</span>
<span class="ft" style="left:601.8px;top:527.8px;font-size:8.8px;line-height:10.6px;color:#7d7d7d;font-weight:700;transform:scaleX(0.983);">840 ($420pp)</span>
<span class="ft" style="left:731.6px;top:527.8px;font-size:8.8px;line-height:10.6px;color:#7d7d7d;font-weight:700;transform:scaleX(0.897);">4</span>
<span class="ft" style="left:791.0px;top:527.8px;font-size:8.8px;line-height:10.6px;color:#7d7d7d;font-weight:700;transform:scaleX(0.917);">5</span>
<span class="ft" style="left:16.8px;top:558.8px;font-size:8.8px;line-height:10.6px;color:#7d7d7d;font-weight:700;transform:scaleX(0.877);">ZAGREB</span>
<span class="ft" style="left:99.7px;top:548.3px;font-size:8.8px;line-height:10.6px;color:#7d7d7d;font-weight:700;transform:scaleX(1.026);">Palace Hotel</span>
<span class="ft" style="left:111.4px;top:558.8px;font-size:8.8px;line-height:10.6px;color:#7d7d7d;font-weight:700;transform:scaleX(1.022);">Zagreb</span>
<span class="ft" style="left:198.2px;top:537.8px;font-size:8.8px;line-height:10.6px;color:#7d7d7d;font-weight:700;transform:scaleX(0.978);">Trg Josipa Jurja</span>
<span class="ft" style="left:181.5px;top:548.3px;font-size:8.8px;line-height:10.6px;color:#7d7d7d;font-weight:700;transform:scaleX(0.972);">Strossmayera 10, 10000,</span>
<span class="ft" style="left:197.5px;top:558.8px;font-size:8.8px;line-height:10.6px;color:#7d7d7d;font-weight:700;transform:scaleX(1.049);">Zagreb, Croatia</span>
<span class="ft" style="left:300.3px;top:558.8px;font-size:8.8px;line-height:10.6px;color:#7d7d7d;font-weight:700;transform:scaleX(0.986);">12/10/2019</span>
<span class="ft" style="left:347.3px;top:558.8px;font-size:8.8px;line-height:10.6px;color:#7d7d7d;font-weight:700;transform:scaleX(1.034);">2pm</span>
<span class="ft" style="left:391.7px;top:558.8px;font-size:8.8px;line-height:10.6px;color:#7d7d7d;font-weight:700;transform:scaleX(1.002);">14/10/2019</span>
<span class="ft" style="left:439.1px;top:558.8px;font-size:8.8px;line-height:10.6px;color:#7d7d7d;font-weight:700;transform:scaleX(0.988);">12pm</span>
<span class="ft" style="left:515.2px;top:558.8px;font-size:8.8px;line-height:10.6px;color:#7d7d7d;font-weight:700;transform:scaleX(0.897);">2</span>
<span class="ft" style="left:522.9px;top:558.8px;font-size:8.8px;line-height:10.6px;color:#7d7d7d;font-weight:700;transform:scaleX(1.006);">More expensive</span>
<span class="ft" style="left:601.8px;top:558.8px;font-size:8.8px;line-height:10.6px;color:#7d7d7d;font-weight:700;transform:scaleX(0.981);">337 ($168.50 pp)</span>
<span class="ft" style="left:731.6px;top:558.8px;font-size:8.8px;line-height:10.6px;color:#7d7d7d;font-weight:700;transform:scaleX(0.897);">4</span>
<span class="ft" style="left:791.0px;top:558.8px;font-size:8.8px;line-height:10.6px;color:#7d7d7d;font-weight:700;transform:scaleX(0.917);">5</span>
<span class="ft" style="left:16.8px;top:600.8px;font-size:8.8px;line-height:10.6px;color:#7d7d7d;font-weight:700;transform:scaleX(0.855);">LJUBLJANA</span>
<span class="ft" style="left:105.7px;top:590.3px;font-size:8.8px;line-height:10.6px;color:#7d7d7d;font-weight:700;transform:scaleX(1.016);">City Hotel</span>
<span class="ft" style="left:106.7px;top:600.8px;font-size:8.8px;line-height:10.6px;color:#7d7d7d;font-weight:700;transform:scaleX(1.010);">Ljubljana</span>
<span class="ft" style="left:174.1px;top:590.3px;font-size:8.8px;line-height:10.6px;color:#7d7d7d;font-weight:700;transform:scaleX(1.018);">Dalmatinova ulica 15, 1000</span>
<span class="ft" style="left:190.8px;top:600.8px;font-size:8.8px;line-height:10.6px;color:#7d7d7d;font-weight:700;transform:scaleX(1.027);">Ljubljana, Slovenia</span>
<span class="ft" style="left:300.3px;top:600.8px;font-size:8.8px;line-height:10.6px;color:#7d7d7d;font-weight:700;transform:scaleX(0.986);">14/10/2019</span>
<span class="ft" style="left:347.3px;top:600.8px;font-size:8.8px;line-height:10.6px;color:#7d7d7d;font-weight:700;transform:scaleX(1.034);">3pm</span>
<span class="ft" style="left:391.7px;top:600.8px;font-size:8.8px;line-height:10.6px;color:#7d7d7d;font-weight:700;transform:scaleX(1.002);">17/10/2019</span>
<span class="ft" style="left:439.1px;top:600.8px;font-size:8.8px;line-height:10.6px;color:#7d7d7d;font-weight:700;transform:scaleX(1.031);">11am</span>
<span class="ft" style="left:515.2px;top:600.8px;font-size:8.8px;line-height:10.6px;color:#7d7d7d;font-weight:700;transform:scaleX(0.897);">3</span>
<span class="ft" style="left:522.9px;top:600.8px;font-size:8.8px;line-height:10.6px;color:#7d7d7d;font-weight:700;transform:scaleX(1.006);">More expensive</span>
<span class="ft" style="left:601.8px;top:600.8px;font-size:8.8px;line-height:10.6px;color:#7d7d7d;font-weight:700;transform:scaleX(0.987);">624 ($312 pp)</span>
<span class="ft" style="left:731.6px;top:600.8px;font-size:8.8px;line-height:10.6px;color:#7d7d7d;font-weight:700;transform:scaleX(0.897);">4</span>
<span class="ft" style="left:791.0px;top:600.8px;font-size:8.8px;line-height:10.6px;color:#7d7d7d;font-weight:700;transform:scaleX(0.917);">5</span>
<div id="sheetbar"></div>
<div class="abs" style="left:0;top:626px;width:794px;height:3px;background:#f0f0f0"></div>
<div class="abs" style="left:16.500px;top:614px;width:0;height:0;border-top:3.500px solid transparent;border-bottom:3.500px solid transparent;border-right:4px solid #217346"></div>
<div class="abs" style="left:35px;top:614px;width:0;height:0;border-top:3.500px solid transparent;border-bottom:3.500px solid transparent;border-left:4px solid #217346"></div>
<span class="ft" style="left:51.6px;top:608.7px;font-size:11.5px;line-height:13.8px;color:#484848;transform:scaleX(0.855);">...</span>
<div class="tsep" style="left:66px"></div>
<div class="tsep" style="left:121px"></div>
<div class="tsep" style="left:194px"></div>
<div class="tsep" style="left:307px"></div>
<div class="tsep" style="left:415px"></div>
<div class="tsep" style="left:716.5px"></div>
<div class="abs" style="left:529px;top:608px;width:118px;height:17px;background:#fff;border-bottom:2px solid #217346;border-left:1px solid #c8c8c8;border-right:1px solid #c8c8c8"></div>
<span class="ft" style="left:75.3px;top:608.7px;font-size:11.5px;line-height:13.8px;color:#484848;transform:scaleX(0.957);">Budget</span>
<span class="ft" style="left:130.0px;top:608.7px;font-size:11.5px;line-height:13.8px;color:#484848;transform:scaleX(0.992);">Attractions</span>
<span class="ft" style="left:205.0px;top:608.7px;font-size:11.5px;line-height:13.8px;color:#484848;transform:scaleX(1.002);">Itinerary by Month</span>
<span class="ft" style="left:320.0px;top:608.7px;font-size:11.5px;line-height:13.8px;color:#484848;transform:scaleX(0.970);">Itinerary by Week</span>
<span class="ft" style="left:428.3px;top:608.7px;font-size:11.5px;line-height:13.8px;color:#484848;transform:scaleX(0.971);">Flight comparison</span>
<span class="ft" style="left:655.6px;top:608.7px;font-size:11.5px;line-height:13.8px;color:#484848;transform:scaleX(0.922);">Car Rental</span>
<span class="ft" style="left:726.7px;top:608.7px;font-size:11.5px;line-height:13.8px;color:#484848;transform:scaleX(0.951);">Transfer Comparison</span>
<span class="ft" style="left:537.0px;top:608.7px;font-size:11.5px;line-height:13.8px;color:#217346;font-weight:700;transform:scaleX(0.928);">Accom Comparison</span>
</div></body></html>
